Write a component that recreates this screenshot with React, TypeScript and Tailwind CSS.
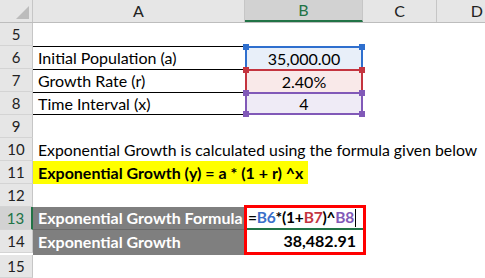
import React from "react";

const font = { fontFamily: "Lato, 'Open Sans', sans-serif" };

function RowHead({ n, active }: { n: number; active?: boolean }) {
  return (
    <div
      className={
        "flex h-[23px] w-[33px] shrink-0 items-center justify-center border-b border-[#d4d4d4] text-[15px] " +
        (active
          ? "border-r-2 border-r-[#217346] bg-[#d2d2d2] text-[#217346]"
          : "border-r border-r-[#c6c6c6] bg-[#e6e6e6] text-[#222]")
      }
    >
      {n}
    </div>
  );
}

function Corner({ color, pos }: { color: string; pos: string }) {
  return <div className={"absolute h-[6px] w-[6px] " + pos} style={{ background: color }} />;
}

function Range({ value, border, fill, last }: { value: string; border: string; fill: string; last?: boolean }) {
  return (
    <div
      className="relative flex h-[23px] w-[118px] items-center justify-center border-x-2 border-t-2 text-[16px]"
      style={{ borderColor: border, background: fill, borderBottomWidth: last ? 2 : 0, borderBottomStyle: "solid" }}
    >
      {value}
      <Corner color={border} pos="-left-[4px] -top-[4px]" />
      <Corner color={border} pos="-right-[4px] -top-[4px]" />
      {last && <Corner color={border} pos="-left-[4px] -bottom-[4px]" />}
      {last && <Corner color={border} pos="-right-[4px] -bottom-[4px]" />}
    </div>
  );
}

export default function App() {
  return (
    <div className="h-[278px] w-[485px] overflow-hidden bg-white text-black" style={font}>
      {/* column headers */}
      <div className="flex h-[23px] border-b border-[#bdbdbd] bg-[#e6e6e6] text-[16px] text-[#222]">
        <div className="relative w-[33px] shrink-0 border-r border-[#c6c6c6]">
          <div
            className="absolute bottom-[3px] right-[3px] h-[13px] w-[13px] bg-[#bcbcbc]"
            style={{ clipPath: "polygon(100% 0, 100% 100%, 0 100%)" }}
          />
        </div>
        <div className="flex w-[212px] items-center justify-center border-r border-[#c6c6c6]">A</div>
        <div className="flex w-[118px] items-center justify-center border-b-2 border-r border-b-[#217346] border-r-[#c6c6c6] bg-[#d2d2d2] text-[#217346]">
          B
        </div>
        <div className="flex w-[74px] items-center justify-center border-r border-[#c6c6c6]">C</div>
        <div className="flex flex-1 items-center justify-end pr-[2px]">D</div>
      </div>

      <div className="flex">
        <RowHead n={5} />
      </div>

      {[
        ["Initial Population (a)", "35,000.00", "#2f6fce", "#e8eff9"],
        ["Growth Rate (r)", "2.40%", "#c4343f", "#f9e9e9"],
        ["Time Interval (x)", "4", "#8159b8", "#efebf6"],
      ].map(([label, value, border, fill], i) => (
        <div key={label} className="flex">
          <RowHead n={6 + i} />
          <div
            className={
              "flex h-[23px] w-[212px] items-center border-t border-black pl-[5px] text-[16px] " +
              (i === 2 ? "border-b" : "")
            }
          >
            {label}
          </div>
          <Range value={value} border={border} fill={fill} last={i === 2} />
        </div>
      ))}

      <div className="flex">
        <RowHead n={9} />
      </div>
      <div className="flex">
        <RowHead n={10} />
        <div className="flex h-[23px] items-center whitespace-nowrap pl-[5px] text-[15.8px]">
          Exponential Growth is calculated using the formula given below
        </div>
      </div>
      <div className="flex">
        <RowHead n={11} />
        <div className="flex h-[23px] w-[275px] items-center whitespace-nowrap bg-[#ffff00] pl-[5px] text-[16px] font-bold">
          Exponential Growth (y) = a * (1 + r) ^x
        </div>
      </div>
      <div className="flex">
        <RowHead n={12} />
      </div>

      <div className="flex">
        <div className="flex flex-col">
          <RowHead n={13} active />
          <RowHead n={14} />
        </div>
        <div className="flex w-[211px] flex-col bg-[#7f7f7f] text-[16px] font-bold text-white">
          <div className="flex h-[23px] items-center border-b border-[#6a6a6a] pl-[5px]">Exponential Growth Formula</div>
          <div className="flex h-[23px] items-center pl-[5px]">Exponential Growth</div>
        </div>
        <div className="-mt-[2px] flex h-[50px] w-[122px] flex-col border-[3px] border-[#ff0000] text-[16px] font-bold">
          <div className="flex h-[22px] items-center whitespace-nowrap border-b-2 border-[#217346] pl-[1px] text-[15.5px] tracking-[-0.2px]">
            <span>=</span>
            <span className="text-[#3a6fc9]">B6</span>
            <span>*(1+</span>
            <span className="text-[#c4343f]">B7</span>
            <span>)^</span>
            <span className="text-[#8159b8]">B8</span>
            <span className="ml-[1px] h-[18px] w-[1px] shrink-0 bg-black" />
          </div>
          <div className="flex h-[22px] items-center justify-end pr-[7px]">38,482.91</div>
        </div>
      </div>
      <div className="flex">
        <RowHead n={15} />
      </div>
    </div>
  );
}
